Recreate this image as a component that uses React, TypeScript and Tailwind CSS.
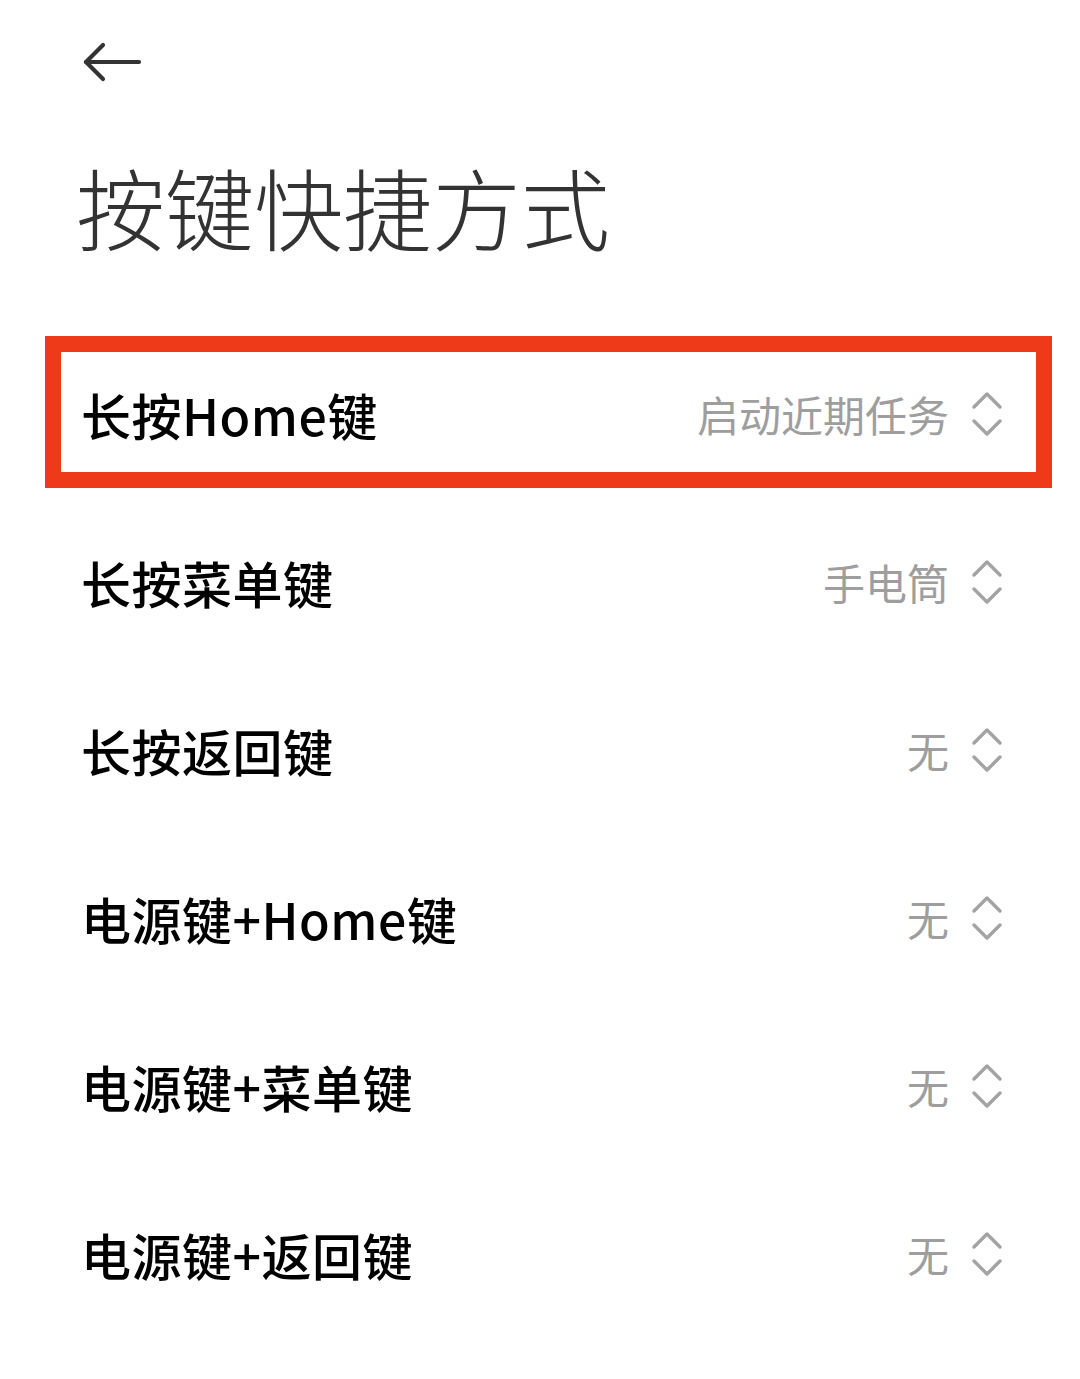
import React from "react";

const rows = [
  { label: "长按Home键", value: "启动近期任务", highlight: true },
  { label: "长按菜单键", value: "手电筒" },
  { label: "长按返回键", value: "无" },
  { label: "电源键+Home键", value: "无" },
  { label: "电源键+菜单键", value: "无" },
  { label: "电源键+返回键", value: "无" },
];

function Chevrons() {
  return (
    <svg width="30" height="46" viewBox="0 0 30 46" fill="none" className="shrink-0">
      <path d="M2 16 L15 3 L28 16" stroke="#a3a3a3" strokeWidth="3.4" strokeLinecap="round" strokeLinejoin="round" />
      <path d="M2 30 L15 43 L28 30" stroke="#a3a3a3" strokeWidth="3.4" strokeLinecap="round" strokeLinejoin="round" />
    </svg>
  );
}

export default function App() {
  return (
    <div
      className="w-[1080px] h-[1379px] bg-white overflow-hidden"
      style={{ fontFamily: '"Noto Sans CJK SC", "Noto Sans", sans-serif' }}
    >
      <div className="pl-[82px] pt-[42px] h-[84px]">
        <svg width="60" height="40" viewBox="0 0 60 40" fill="none">
          <path d="M57 20 H4" stroke="#333333" strokeWidth="4.2" strokeLinecap="round" />
          <path d="M21 3 L4 20 L21 37" stroke="#333333" strokeWidth="4.2" strokeLinecap="round" strokeLinejoin="round" />
        </svg>
      </div>
      <div className="pl-[76px] pt-[58px] h-[249px]">
        <h1 className="text-[89px] leading-[128px] font-light text-[#333333]">按键快捷方式</h1>
      </div>
      <div className="flex flex-col">
        {rows.map((r) => (
          <div key={r.label} className="relative h-[168px] flex items-center pl-[81px] pr-[78px] pb-[6px]">
            <div className="flex-1 text-[50px] font-medium text-black leading-none tracking-[0.5px]">{r.label}</div>
            <div className="flex items-center gap-[23px]">
              <span className="text-[42px] text-[#9e9e9e] leading-none">{r.value}</span>
              <Chevrons />
            </div>
            {r.highlight && (
              <div className="absolute left-[45px] top-[3px] w-[1007px] h-[152px] border-[16px] border-[#ef3a1a] pointer-events-none" />
            )}
          </div>
        ))}
      </div>
    </div>
  );
}
